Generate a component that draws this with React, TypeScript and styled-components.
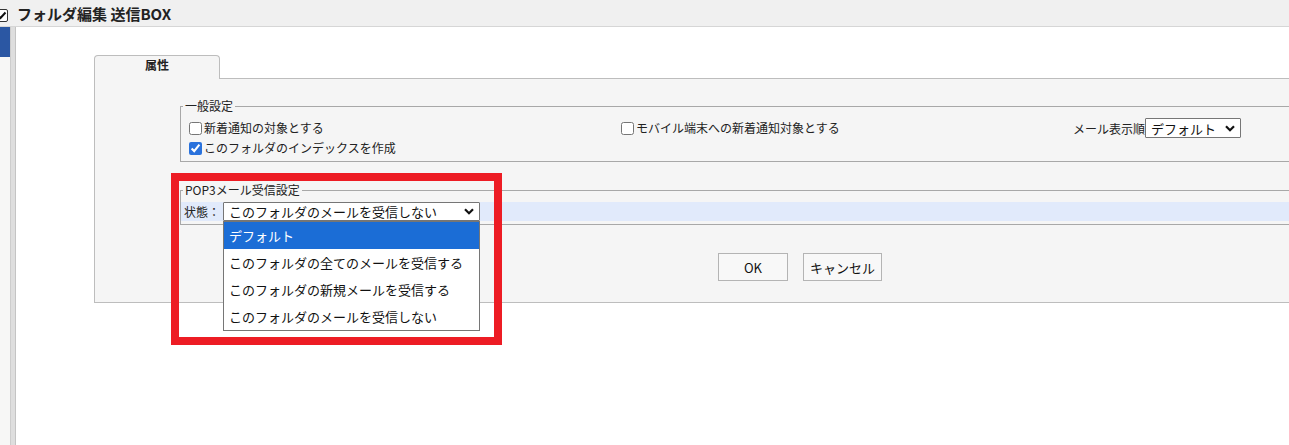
import React from "react";
import styled, { createGlobalStyle } from "styled-components";

const GlobalStyle = createGlobalStyle`
  html, body { margin: 0; padding: 0; overflow: hidden; background: #fff; }
  body { font-family: "Noto Sans CJK JP", "Noto Sans", sans-serif; color: #222; }
  * { box-sizing: border-box; }
`;

const Page = styled.div`
  width: 1289px;
  height: 445px;
  display: flex;
  flex-direction: column;
  overflow: hidden;
`;

const TopBar = styled.header`
  height: 27px;
  flex: none;
  display: flex;
  align-items: flex-start;
  background: #f0f0f0;
  border-bottom: 1px solid #d6d6d6;
`;

const HeadCheck = styled.span`
  width: 13px;
  height: 13px;
  margin: 9px 0 0 -5px;
  border: 1px solid #333;
  border-radius: 2px;
  background: #fff;
  display: flex;
  align-items: center;
  justify-content: center;
`;

const Title = styled.h1`
  margin: 4px 0 0 9px;
  font-size: 15px;
  font-weight: 700;
  line-height: 19px;
  color: #222;
`;

const Body = styled.div`
  flex: 1;
  display: flex;
  min-height: 0;
`;

const Sidebar = styled.aside`
  width: 10px;
  flex: none;
  background: #f7f7f6;
`;

const SideActive = styled.div`
  height: 30px;
  background: #2b57a3;
`;

const Splitter = styled.div`
  width: 6px;
  flex: none;
  background: #dedede;
  border-left: 1px solid #cdcdcd;
  border-right: 1px solid #c4c4c4;
`;

const Content = styled.main`
  flex: 1;
  min-width: 0;
  overflow: hidden;
  padding: 28px 0 0 78px;
  background: #fff;
`;

const TabRow = styled.div`
  display: flex;
`;

const Tab = styled.div`
  width: 126px;
  height: 24px;
  margin-bottom: -1px;
  position: relative;
  z-index: 1;
  border: 1px solid #bdbdbd;
  border-bottom: none;
  border-radius: 4px 4px 0 0;
  background: #f5f5f5;
  font-size: 12px;
  font-weight: 700;
  text-align: center;
  line-height: 18px;
  color: #222;
`;

const Panel = styled.section`
  position: relative;
  width: 1412px;
  border: 1px solid #bdbdbd;
  background: #f5f5f5;
  padding: 19px 85px 21px;
`;

const Fieldset = styled.fieldset<{ $gap?: number }>`
  margin: ${(p) => p.$gap ?? 0}px 0 0 0;
  padding: 4px 0 3px 0;
  border: 1px solid #a8a8a8;
  min-width: 0;
`;

const Legend = styled.legend`
  margin-left: 2px;
  padding: 0 2px;
  font-size: 12px;
  line-height: 16px;
  color: #222;
`;

const OptionGrid = styled.div`
  display: grid;
  grid-template-columns: 432px 452px 1fr;
  grid-auto-rows: 20px;
  align-items: center;
  padding-left: 8px;
`;

const CheckLabel = styled.label`
  display: flex;
  align-items: center;
  gap: 2px;
  font-size: 12px;
  line-height: 16px;
  color: #222;
  white-space: nowrap;
`;

const Check = styled.input`
  margin: 0;
  width: 13px;
  height: 13px;
  accent-color: #2a72dc;
`;

const InlineField = styled.div`
  display: flex;
  align-items: center;
  font-size: 12px;
  white-space: nowrap;
`;

const SelectBox = styled.div<{ $width: number; $height: number }>`
  position: relative;
  width: ${(p) => p.$width}px;
  height: ${(p) => p.$height}px;
  display: flex;
  align-items: center;
  justify-content: space-between;
  padding: 0 5px 0 5px;
  border: 1px solid #767676;
  border-radius: 1px;
  background: #fff;
  font-size: 13px;
  line-height: 17px;
  color: #111;
  white-space: nowrap;
`;

const StatusRow = styled.div`
  display: flex;
  align-items: center;
  height: 19px;
  padding-left: 3px;
  background: #e1eafb;
  font-size: 12px;
`;

const StatusLabel = styled.span`
  width: 36px;
  margin-right: 3px;
  color: #222;
`;

const DropList = styled.ul`
  position: absolute;
  top: 100%;
  left: -1px;
  width: 257px;
  margin: 1px 0 0;
  padding: 0;
  list-style: none;
  border: 1px solid #767676;
  background: #fff;
  z-index: 2;
`;

const DropItem = styled.li<{ $active?: boolean }>`
  height: 27px;
  line-height: 27px;
  padding-left: 5px;
  font-size: 13px;
  color: ${(p) => (p.$active ? "#fff" : "#111")};
  background: ${(p) => (p.$active ? "#1b6dd6" : "transparent")};
`;

const ButtonRow = styled.div`
  display: flex;
  justify-content: center;
  gap: 15px;
  margin-top: 28px;
`;

const Button = styled.button<{ $width: number }>`
  width: ${(p) => p.$width}px;
  height: 28px;
  margin: 0;
  padding: 0;
  border: 1px solid #b4b4b4;
  background: #f8f8f8;
  font-family: "Noto Sans CJK JP", "Noto Sans", sans-serif;
  font-size: 13px;
  color: #111;
`;

const Highlight = styled.div`
  position: absolute;
  left: 76px;
  top: 94px;
  width: 331px;
  height: 172px;
  border: 8px solid #ed1c24;
  z-index: 3;
  pointer-events: none;
`;

const Chevron = () => (
  <svg width="10" height="7" viewBox="0 0 10 7">
    <path d="M1 1.2 L5 5.2 L9 1.2" fill="none" stroke="#111" strokeWidth="2.2" />
  </svg>
);

const options = [
  "デフォルト",
  "このフォルダの全てのメールを受信する",
  "このフォルダの新規メールを受信する",
  "このフォルダのメールを受信しない",
];

export default function App() {
  return (
    <Page>
      <GlobalStyle />
      <TopBar>
        <HeadCheck>
          <svg width="11" height="11" viewBox="0 0 11 11">
            <path d="M2 5.5 L4.5 8 L9.5 2.5" fill="none" stroke="#111" strokeWidth="2" />
          </svg>
        </HeadCheck>
        <Title>フォルダ編集 送信BOX</Title>
      </TopBar>
      <Body>
        <Sidebar>
          <SideActive />
        </Sidebar>
        <Splitter />
        <Content>
          <TabRow>
            <Tab>属性</Tab>
          </TabRow>
          <Panel>
            <Fieldset>
              <Legend>一般設定</Legend>
              <OptionGrid>
                <CheckLabel>
                  <Check type="checkbox" readOnly />
                  新着通知の対象とする
                </CheckLabel>
                <CheckLabel>
                  <Check type="checkbox" readOnly />
                  モバイル端末への新着通知対象とする
                </CheckLabel>
                <InlineField>
                  メール表示順
                  <SelectBox $width={96} $height={20}>
                    デフォルト
                    <Chevron />
                  </SelectBox>
                </InlineField>
                <CheckLabel>
                  <Check type="checkbox" checked readOnly />
                  このフォルダのインデックスを作成
                </CheckLabel>
              </OptionGrid>
            </Fieldset>
            <Fieldset $gap={20}>
              <Legend>POP3メール受信設定</Legend>
              <StatusRow>
                <StatusLabel>状態：</StatusLabel>
                <SelectBox $width={257} $height={19}>
                  このフォルダのメールを受信しない
                  <Chevron />
                  <DropList>
                    {options.map((o, i) => (
                      <DropItem key={o} $active={i === 0}>
                        {o}
                      </DropItem>
                    ))}
                  </DropList>
                </SelectBox>
              </StatusRow>
            </Fieldset>
            <ButtonRow>
              <Button $width={70}>OK</Button>
              <Button $width={79}>キャンセル</Button>
            </ButtonRow>
            <Highlight />
          </Panel>
        </Content>
      </Body>
    </Page>
  );
}
